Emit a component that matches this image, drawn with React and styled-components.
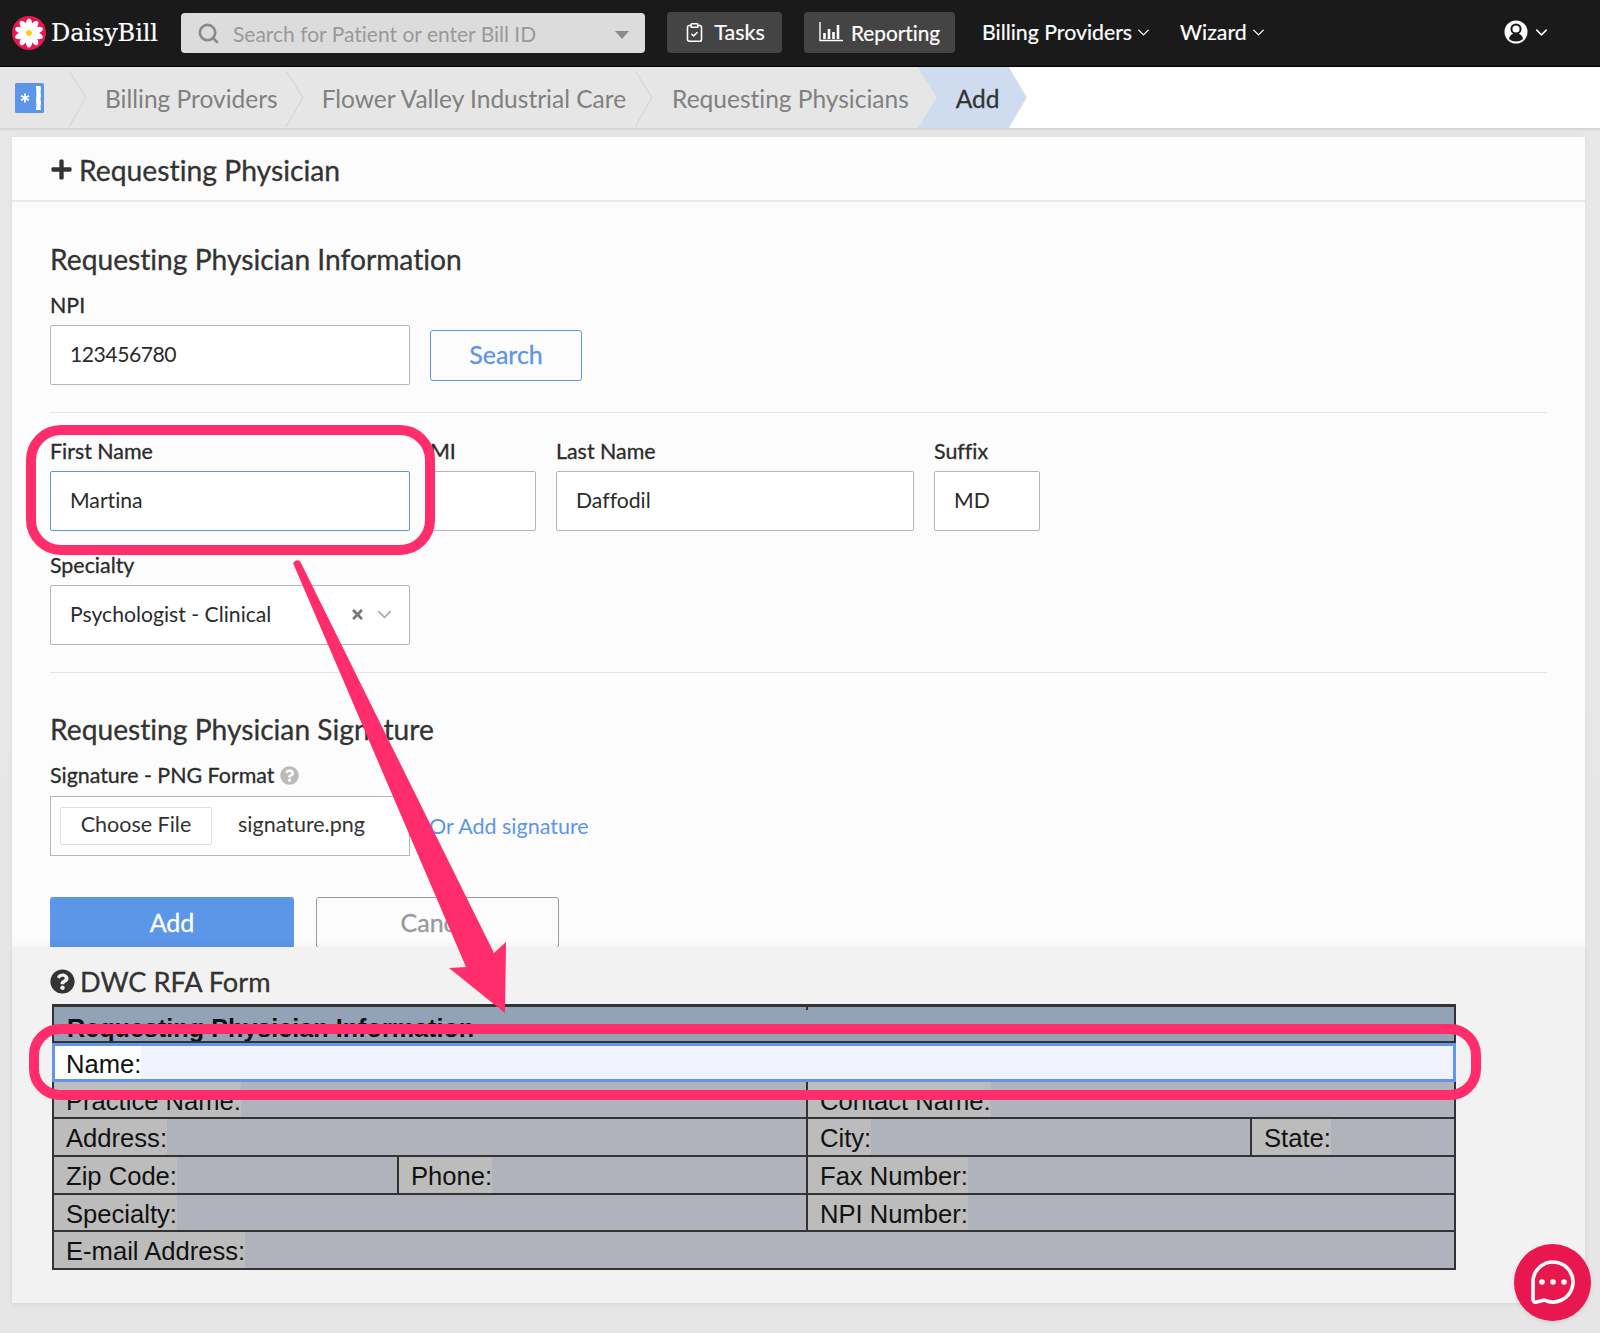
import React from 'react';
import styled, { createGlobalStyle } from 'styled-components';
import { ChevronDown, ClipboardCheck, Search as SearchIcon } from 'lucide-react';
import { FaPlus, FaQuestionCircle, FaTimes } from 'react-icons/fa';

const GlobalStyle = createGlobalStyle`
  html, body { margin: 0; padding: 0; background: #e6e6e6; }
  * { box-sizing: border-box; }
  body { font-family: Lato, "Open Sans", sans-serif; color: #333; font-variant-ligatures: none; }
`;

const Page = styled.div`
  position: relative; width: 1600px; height: 1333px; overflow: hidden;
  background: linear-gradient(#e8e8e8, #e6e6e6);
`;

/* top nav */
const Nav = styled.nav`
  display: flex; align-items: center; height: 67px; padding: 0 14px 0 12px;
  background: #1a1a1a; border-bottom: 1px solid #000; color: #fff;
  -webkit-text-stroke: 0.2px currentColor;
`;
const Brand = styled.div`
  display: flex; align-items: center; gap: 5px; width: 169px;
  font-family: "DejaVu Serif", serif; font-size: 24px; letter-spacing: -0.1px;
`;
const SearchBox = styled.div`
  display: flex; align-items: center; width: 464px; height: 40px; padding: 0 16px;
  background: #dcdcdc; border-radius: 4px; color: #999; font-size: 21px; gap: 13px;
  -webkit-text-stroke: 0;
  span { flex: 1; }
`;
const Caret = styled.i`
  width: 0; height: 0; margin: 3px 0 0 1px;
  border: 7px solid transparent; border-top: 8px solid #8a8a8a; border-bottom: 0;
`;
const NavButton = styled.div`
  display: flex; align-items: center; justify-content: center; gap: ${p => p.$gap || 9}px;
  height: 41px; width: ${p => p.$w}px; margin-left: ${p => p.$ml}px; margin-top: -1px; padding-bottom: 1px;
  background: #444; border-radius: 4px; font-size: ${p => p.$fs || 21.5}px;
`;
const NavLink = styled.div`
  display: flex; align-items: center; gap: 2px; margin-left: ${p => p.$ml}px;
  font-size: 21.3px; margin-top: -2px;
`;
const UserMenu = styled.div`
  display: flex; align-items: center; gap: 4px; margin-left: auto; margin-right: 35px; margin-top: -2px;
`;

/* breadcrumb */
const Crumbs = styled.div`
  display: flex; height: 61px; background: #fff; box-shadow: 0 1px 3px rgba(0, 0, 0, 0.14);
`;
const HomeCrumb = styled.div`
  display: flex; align-items: center; width: 69px; padding-left: 15px; background: #e6e6e6;
`;
const Crumb = styled.div`
  position: relative; display: flex; align-items: center; height: 100%;
  padding: 2px ${p => p.$pr}px 0 ${p => p.$pl}px;
  background: #e6e6e6; color: #808080; font-size: 24.5px;
`;
const CrumbLine = styled.svg`
  position: absolute; left: 0; top: 0; width: 18px; height: 61px;
`;
const ActiveWrap = styled.div`
  width: 109px; height: 100%;
  background: linear-gradient(90deg, #e6e6e6 20px, transparent 20px);
`;
const ActiveCrumb = styled.div`
  display: flex; align-items: center; height: 100%; padding: 2px 0 0 38px;
  background: #cfdcef; color: #333; font-size: 24.5px; -webkit-text-stroke: 0.3px currentColor;
  clip-path: polygon(0 0, 91px 0, 100% 50%, 91px 100%, 0 100%, 19px 50%);
`;

/* form panel */
const Panel = styled.main`
  width: 1573px; margin: 9px 0 0 12px; background: #fcfcfc;
  box-shadow: 0 0 6px rgba(0, 0, 0, 0.04);
`;
const PanelHead = styled.header`
  display: flex; align-items: center; gap: 6px; height: 65px; padding: 2px 0 0 38px;
  border-bottom: 2px solid #e9e9e9; font-size: 28.3px; color: #333; -webkit-text-stroke: 0.3px currentColor;
`;
const PanelBody = styled.div`
  height: 746px; padding: 42px 38px 0 38px;
`;
const Heading = styled.h2`
  margin: ${p => p.$mt || 0}px 0 0; font-size: 28.2px; line-height: 30px; font-weight: 400; color: #333;
  -webkit-text-stroke: 0.3px currentColor;
`;
const Label = styled.label`
  display: flex; align-items: center; gap: 6px; height: 26px;
  margin: ${p => p.$mt || 0}px 0 ${p => p.$mb || 7}px; font-size: 21.4px; color: #2b2b2b;
  -webkit-text-stroke: 0.3px currentColor;
`;
const Row = styled.div`
  display: flex; align-items: ${p => p.$center ? 'center' : 'flex-start'}; gap: ${p => p.$gap || 20}px; margin-top: ${p => p.$mt || 0}px;
`;
const Field = styled.div` width: ${p => p.$w}px; margin-left: ${p => p.$ml || 0}px; `;
const Input = styled.div`
  display: flex; align-items: center; height: 60px; padding: 0 19px 2px; background: #fff;
  border: 1px solid ${p => p.$focus ? '#5c96e8' : '#b5b5b5'}; border-radius: 2px;
  font-size: 21.2px; color: #2b2b2b; letter-spacing: ${p => p.$tight ? -0.5 : 0}px;
`;
const Rule = styled.hr`
  height: 1px; margin: ${p => p.$mt}px 0 ${p => p.$mb}px; border: 0; background: #e4e4e4;
`;
const OutlineButton = styled.button`
  width: ${p => p.$w}px; height: 51px; padding: 0 0 2px; background: transparent; border: 1px solid ${p => p.$color};
  border-radius: 3px; color: ${p => p.$text}; font: 400 25px Lato, sans-serif; -webkit-text-stroke: 0.3px currentColor;
`;
const SolidButton = styled.button`
  width: 244px; height: 51px; padding: 0 0 2px; background: #5c96e8; border: 0;
  border-radius: 3px; color: #fff; font: 400 25px Lato, sans-serif; -webkit-text-stroke: 0.3px currentColor;
`;
const SpecialtyIcons = styled.div`
  display: flex; align-items: center; gap: 8px; margin: 0 -6px 0 auto; color: #777;
`;
const FileBox = styled.div`
  display: flex; align-items: center; gap: 26px; width: 360px; height: 60px; padding: 0 0 0 9px;
  background: #fff; border: 1px solid #b5b5b5; font-size: 21.5px; color: #333;
`;
const FileName = styled.span` padding-bottom: 4px; `;
const FileButton = styled.div`
  display: flex; align-items: center; justify-content: center; width: 152px; height: 38px; margin-top: -1px; padding-bottom: 3px;
  border: 1px solid #ddd; border-radius: 2px; color: #333;
`;
const AddSignature = styled.a`
  font-size: 21.5px; color: #5c96e8; margin: -1px 0 0 -1px;
`;

/* DWC form preview */
const FormPanel = styled.section`
  position: relative; width: 1573px; height: 356px; margin: -1px 0 0 12px; padding: 19px 0 0 40px; background: #f2f2f2;
  box-shadow: 0 -2px 6px rgba(0, 0, 0, 0.04), 0 2px 6px rgba(0, 0, 0, 0.05);
`;
const FormTitle = styled.h3`
  display: flex; align-items: center; gap: 5px; height: 30px; margin: 0 0 0 -2px; font-size: 27.2px; font-weight: 400; color: #333;
  -webkit-text-stroke: 0.3px currentColor;
`;
const Sheet = styled.div`
  width: 1404px; margin-top: 8px; border: 2px solid #333; border-top-width: 3px;
  background: #b1b3bc; font: 25.6px "Liberation Sans", Arial, sans-serif; color: #111;
`;
const SheetRow = styled.div`
  display: flex; height: ${p => p.$h}px; border-bottom: 2px solid #333;
  &:last-child { border-bottom: 0; }
`;
const HeaderRow = styled(SheetRow)`
  position: relative; align-items: flex-start; padding: 7px 0 0 13px; background: #93a3b7; font-size: 25.2px; font-weight: 700; overflow: hidden;
  &::after { content: ''; position: absolute; left: 752px; top: 0; width: 2px; height: 3px; background: #333; }
`;
const NameRow = styled(SheetRow)`
  position: relative; margin: 0 -2px; height: 39px; background: #f0f3ff; border: 3px solid #6495ed;
`;
const Cell = styled.div`
  display: flex; flex: ${p => p.$w ? `0 0 ${p.$w}px` : 1}; height: 100%;
  & + & { border-left: 2px solid #333; }
`;
const CellLabel = styled.span`
  display: flex; align-items: center; height: 100%; padding: 3px 0 0 ${p => p.$pl || 12}px; background: ${p => p.$bg || '#bcbcbc'};
`;

/* overlays */
const Annotations = styled.svg`
  position: absolute; left: 0; top: 0; width: 1600px; height: 1333px; pointer-events: none;
`;
const ChatBubble = styled.div`
  position: absolute; left: 1514px; top: 1244px; display: flex; align-items: center; justify-content: center;
  width: 77px; height: 77px; border-radius: 50%; background: #e8174f;
  box-shadow: 0 1px 4px rgba(0, 0, 0, 0.12);
`;

const petals = [0, 36, 72, 108, 144, 180, 216, 252, 288, 324];

function DaisyLogo() {
  return (
    <svg width="34" height="34" viewBox="0 0 34 34">
      <circle cx="17" cy="17" r="17" fill="#e8174f" />
      {petals.map(a => (
        <ellipse key={a} cx="17" cy="8.8" rx="3.2" ry="6.4" fill="#fff" transform={`rotate(${a} 17 17)`} />
      ))}
      <circle cx="17" cy="17" r="3" fill="#fcd116" />
    </svg>
  );
}

function ReportIcon() {
  return (
    <svg width="24" height="20" viewBox="0 0 24 20" fill="none" stroke="#fff">
      <path d="M1 0v18.500h23" strokeWidth="1.4" />
      <path d="M5.500 17v-6M10 17V7M14.500 17V10M19 17V3" strokeWidth="2.600" />
    </svg>
  );
}

function UserIcon() {
  return (
    <svg width="24" height="24" viewBox="0 0 24 24">
      <circle cx="12" cy="12" r="11.500" fill="#fff" />
      <circle cx="12" cy="9" r="4.600" fill="#fff" stroke="#1a1a1a" strokeWidth="2" />
      <path d="M5 19c.5-3.600 3.500-5.400 7-5.400s6.500 1.800 7 5.400c-2 1.700-4.400 2.500-7 2.500s-5-.8-7-2.500z" fill="#1a1a1a" />
    </svg>
  );
}

function ChartCardIcon() {
  return (
    <svg width="29" height="30" viewBox="0 0 29 30">
      <rect width="29" height="30" rx="1.500" fill="#5c96e8" />
      <path d="M21 3h4.500l.5 3-.5 3 .5 3-.5 4 .5 4-.5 4 .5 3H21l.5-5-.5-5 .5-5z" fill="#fff" />
      <path d="M10 10.500v9M6 12.800l8 4.400M14 12.800l-8 4.400" stroke="#fff" strokeWidth="1.800" />
    </svg>
  );
}

function ChatIcon() {
  return (
    <svg width="46" height="46" viewBox="0 0 46 46" fill="none">
      <path d="M14.500 40.100A20 20 0 1 0 3 22L3 39Q3 43 6.500 42Z" stroke="#fff" strokeWidth="3.600" strokeLinejoin="round" />
      <circle cx="12" cy="22" r="2.800" fill="#fff" />
      <circle cx="23" cy="22" r="2.800" fill="#fff" />
      <circle cx="34" cy="22" r="2.800" fill="#fff" />
    </svg>
  );
}

function CrumbDivider() {
  return (
    <CrumbLine viewBox="0 0 18 61" fill="none" stroke="#d2d2d2" strokeWidth="1">
      <path d="M0 4l17 26.500L0 60" />
    </CrumbLine>
  );
}

export default function App() {
  return (
    <Page>
      <GlobalStyle />
      <Nav>
        <Brand><DaisyLogo />DaisyBill</Brand>
        <SearchBox>
          <SearchIcon size={23} strokeWidth={2.8} color="#8a8a8a" />
          <span>Search for Patient or enter Bill ID</span>
          <Caret />
        </SearchBox>
        <NavButton $w={115} $ml={22}><ClipboardCheck size={21} strokeWidth={1.8} />Tasks</NavButton>
        <NavButton $w={151} $ml={22} $fs={20.8} $gap={8}><ReportIcon />Reporting</NavButton>
        <NavLink $ml={27}>Billing Providers <ChevronDown size={19} strokeWidth={1.6} /></NavLink>
        <NavLink $ml={27}>Wizard <ChevronDown size={19} strokeWidth={1.6} /></NavLink>
        <UserMenu><UserIcon /><ChevronDown size={19} strokeWidth={1.8} /></UserMenu>
      </Nav>

      <Crumbs>
        <HomeCrumb><ChartCardIcon /></HomeCrumb>
        <Crumb $pl={36} $pr={8}><CrumbDivider />Billing Providers</Crumb>
        <Crumb $pl={36} $pr={9}><CrumbDivider />Flower Valley Industrial Care</Crumb>
        <Crumb $pl={37} $pr={9}><CrumbDivider />Requesting Physicians</Crumb>
        <ActiveWrap><ActiveCrumb>Add</ActiveCrumb></ActiveWrap>
      </Crumbs>

      <Panel>
        <PanelHead><FaPlus size={23} color="#333" />Requesting Physician</PanelHead>
        <PanelBody>
          <Heading>Requesting Physician Information</Heading>
          <Label $mt={18}>NPI</Label>
          <Row $center>
            <Field $w={360}><Input $tight>123456780</Input></Field>
            <OutlineButton $w={152} $color="#5c96e8" $text="#5c96e8">Search</OutlineButton>
          </Row>
          <Rule $mt={27} $mb={25} />
          <Row>
            <Field $w={360}><Label>First Name</Label><Input $focus>Martina</Input></Field>
            <Field $w={106}><Label>MI</Label><Input /></Field>
            <Field $w={358}><Label>Last Name</Label><Input>Daffodil</Input></Field>
            <Field $w={106}><Label>Suffix</Label><Input>MD</Input></Field>
          </Row>
          <Row $mt={21}>
            <Field $w={360}>
              <Label>Specialty</Label>
              <Input>
                Psychologist - Clinical
                <SpecialtyIcons><FaTimes size={15} /><ChevronDown size={23} strokeWidth={1.8} color="#aaa" /></SpecialtyIcons>
              </Input>
            </Field>
          </Row>
          <Rule $mt={27} $mb={0} />
          <Heading $mt={41}>Requesting Physician Signature</Heading>
          <Label $mt={18} $mb={8}>
            Signature - PNG Format <FaQuestionCircle size={19} color="#bbb" />
          </Label>
          <Row $center>
            <FileBox><FileButton>Choose File</FileButton><FileName>signature.png</FileName></FileBox>
            <AddSignature>Or Add signature</AddSignature>
          </Row>
          <Row $mt={41} $gap={22}>
            <SolidButton>Add</SolidButton>
            <OutlineButton $w={243} $color="#9a9a9a" $text="#999">Cancel</OutlineButton>
          </Row>
        </PanelBody>
      </Panel>

      <FormPanel>
        <FormTitle><FaQuestionCircle size={25} color="#333" />DWC RFA Form</FormTitle>
        <Sheet>
          <HeaderRow $h={36}>Requesting Physician Information</HeaderRow>
          <NameRow><CellLabel $bg="#fff" $pl={11}>Name:</CellLabel></NameRow>
          <SheetRow $h={37}>
            <Cell $w={752}><CellLabel>Practice Name:</CellLabel></Cell>
            <Cell><CellLabel>Contact Name:</CellLabel></Cell>
          </SheetRow>
          <SheetRow $h={38}>
            <Cell $w={752}><CellLabel>Address:</CellLabel></Cell>
            <Cell $w={444}><CellLabel>City:</CellLabel></Cell>
            <Cell><CellLabel>State:</CellLabel></Cell>
          </SheetRow>
          <SheetRow $h={38}>
            <Cell $w={343}><CellLabel>Zip Code:</CellLabel></Cell>
            <Cell $w={409}><CellLabel>Phone:</CellLabel></Cell>
            <Cell><CellLabel>Fax Number:</CellLabel></Cell>
          </SheetRow>
          <SheetRow $h={37}>
            <Cell $w={752}><CellLabel>Specialty:</CellLabel></Cell>
            <Cell><CellLabel>NPI Number:</CellLabel></Cell>
          </SheetRow>
          <SheetRow $h={36}>
            <Cell><CellLabel>E-mail Address:</CellLabel></Cell>
          </SheetRow>
        </Sheet>
      </FormPanel>

      <Annotations viewBox="0 0 1600 1333" fill="none">
        <rect x="31" y="430" width="399" height="120" rx="30" stroke="#ff2d6b" strokeWidth="10" />
        <rect x="34" y="1029" width="1442" height="66" rx="26" stroke="#ff2d6b" strokeWidth="10" />
        <path d="M293 563 Q296 559 300 561 L494 953 L506 942 L505 1013 L449 968 L466 967 Z" fill="#ff2d6b" />
      </Annotations>

      <ChatBubble><ChatIcon /></ChatBubble>
    </Page>
  );
}
